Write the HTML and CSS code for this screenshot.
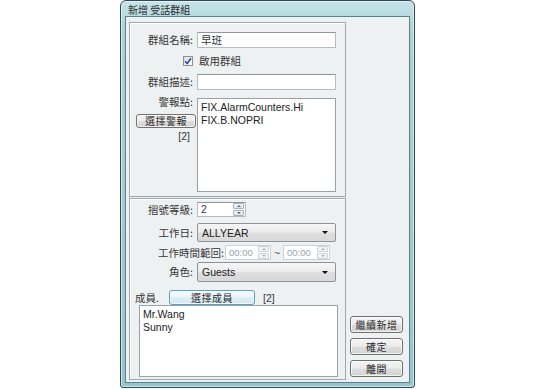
FILE: index.html
```html
<!DOCTYPE html>
<html lang="zh-Hant">
<head>
<meta charset="utf-8">
<title>新增 受話群組</title>
<link rel="stylesheet" href="styles.css">
</head>
<body>
<div class="window">
  <div class="titlebar">新增 受話群組</div>
  <div class="client">
    <div class="main">
      <div class="panel p1">
        <div class="row r-name">
          <span class="lbl">群組名稱:</span>
          <div class="input wide">早班</div>
        </div>
        <div class="row r-check">
          <span class="cb"><svg width="8" height="8" viewBox="0 0 8 8"><path d="M1 4.2 L3.2 6.5 L7 1.2" fill="none" stroke="#2b4f9e" stroke-width="1.6"/></svg></span>
          <span class="cb-text">啟用群組</span>
        </div>
        <div class="row r-desc">
          <span class="lbl">群組描述:</span>
          <div class="input wide"></div>
        </div>
        <div class="row r-alarm">
          <div class="alarm-side">
            <span class="lbl-top">警報點:</span>
            <button class="btn btn-alarm">選擇警報</button>
            <span class="count">[2]</span>
          </div>
          <div class="list alarm-list">FIX.AlarmCounters.Hi<br>FIX.B.NOPRI</div>
        </div>
      </div>
      <div class="panel p2">
        <div class="row r-spin">
          <span class="lbl">摺號等級:</span>
          <div class="input spin">
            <span class="val">2</span>
            <span class="spinbtns"><span class="sb up"></span><span class="sb down"></span></span>
          </div>
        </div>
        <div class="row r-day">
          <span class="lbl">工作日:</span>
          <div class="combo wide"><span class="val latin">ALLYEAR</span><span class="arrow"></span></div>
        </div>
        <div class="row r-time">
          <span class="lbl lbl-time">工作時間範回:</span>
          <div class="input spin time t1">
            <span class="val">00:00</span>
            <span class="spinbtns"><span class="sb up"></span><span class="sb down"></span></span>
          </div>
          <span class="tilde">~</span>
          <div class="input spin time t2">
            <span class="val">00:00</span>
            <span class="spinbtns"><span class="sb up"></span><span class="sb down"></span></span>
          </div>
        </div>
        <div class="row r-role">
          <span class="lbl">角色:</span>
          <div class="combo wide"><span class="val latin">Guests</span><span class="arrow"></span></div>
        </div>
        <div class="row r-member">
          <span class="mem-lbl">成員.</span>
          <button class="btn btn-member">選擇成員</button>
          <span class="mem-count">[2]</span>
        </div>
        <div class="list member-list">Mr.Wang<br>Sunny</div>
      </div>
    </div>
    <div class="side">
      <button class="btn side-btn">繼續新增</button>
      <button class="btn side-btn">確定</button>
      <button class="btn side-btn">離開</button>
    </div>
  </div>
</div>
</body>
</html>
```

FILE: styles.css
```css
* { box-sizing: border-box; margin: 0; padding: 0; }
html, body { background: #ffffff; }
body {
  margin: 0;
  font-family: "Noto Sans CJK TC", "Liberation Sans", sans-serif;
  font-size: 10.5px;
  color: #363636;
}

.window {
  margin-left: 120px;
  width: 295px;
  height: 388px;
  border: 1px solid #2e4950;
  border-radius: 6px 6px 3px 3px;
  background: linear-gradient(to bottom, #c6e4e9 0, #a9d2d9 30px, #95c6cf 100%);
  box-shadow: inset 0 0 0 1px rgba(255,255,255,0.55);
  display: flex;
  flex-direction: column;
}

.titlebar {
  flex: none;
  height: 15px;
  line-height: 17px;
  padding-left: 7px;
  font-size: 10px;
  color: #2a2a2a;
}

.client {
  flex: 1;
  margin: 0 4px 4px 4px;
  background: #eef1f2;
  border: 1px solid #5f7f89;
  display: flex;
}

.main {
  width: 220px;
  padding: 5px 0 2px 3px;
  display: flex;
  flex-direction: column;
  gap: 1px;
}

.panel {
  border: 1px solid #9ea7ab;
  box-shadow: inset 1px 1px 0 #ffffff;
  background: #eef1f2;
  display: flex;
  flex-direction: column;
}
.p1 { height: 175px; flex: none; }
.p2 { flex: 1; }

.row { display: flex; align-items: center; flex: none; }
.lbl {
  width: 63px;
  margin-right: 4px;
  text-align: right;
  white-space: nowrap;
  line-height: 12px;
}

.input {
  height: 16px;
  background: #ffffff;
  border: 1px solid #b5bcc2;
  border-top-color: #8e969c;
  padding-left: 3px;
  line-height: 14px;
  white-space: nowrap;
}
.wide { width: 139px; }

.latin, .list, .val { font-family: "Liberation Sans", sans-serif; }

.r-name { margin-top: 9px; height: 16px; }
.r-check { margin-top: 7px; height: 12px; padding-left: 53px; }
.r-desc { margin-top: 7px; height: 16px; }
.r-alarm { margin-top: 8px; height: 94px; align-items: flex-start; }

.cb {
  width: 10px;
  height: 10px;
  border: 1px solid #8e8f8f;
  background: linear-gradient(135deg, #dcdcdc, #ffffff);
  display: flex;
  align-items: center;
  justify-content: center;
  margin-right: 6px;
}
.cb-text { line-height: 12px; }

.alarm-side {
  width: 67px;
  display: flex;
  flex-direction: column;
  align-items: flex-end;
}
.lbl-top { margin-top: -2px; padding-right: 4px; line-height: 12px; }
.count {
  font-family: "Liberation Sans", sans-serif;
  padding-right: 7px;
  line-height: 12px;
  margin-top: 2px;
}

.list {
  background: #ffffff;
  border: 1px solid #9aa2a8;
  padding: 2px 3px;
  line-height: 12.5px;
  color: #222;
}
.alarm-list { width: 139px; height: 94px; }

.btn {
  font-family: "Noto Sans CJK TC", sans-serif;
  font-size: 10px;
  color: #2a2a2a;
  border: 1px solid #707070;
  border-radius: 3px;
  background: linear-gradient(to bottom, #f4f4f4 0, #ececec 48%, #dedede 52%, #d2d2d2 100%);
  box-shadow: inset 0 0 0 1px rgba(255,255,255,0.7);
  display: flex;
  align-items: center;
  justify-content: center;
  line-height: 12px;
  letter-spacing: 0.5px;
}
.btn-alarm {
  width: 60px;
  height: 14px;
  margin-top: 6px;
  margin-right: 1px;
}

/* panel 2 */
.r-spin { margin-top: 3px; height: 15px; }
.r-day { margin-top: 6px; height: 19px; }
.r-time { margin-top: 3px; height: 15px; }
.r-role { margin-top: 2px; height: 20px; }
.r-member { margin-top: 8px; height: 15px; }

.spin {
  width: 49px;
  height: 15px;
  display: flex;
  align-items: center;
  justify-content: space-between;
  padding-right: 1px;
}
.spin .val { line-height: 13px; }
.spinbtns {
  width: 11px;
  height: 13px;
  display: flex;
  flex-direction: column;
  gap: 1px;
}
.sb {
  flex: 1;
  border: 1px solid #a8b0b6;
  border-radius: 1px;
  background: linear-gradient(#f7f8f9, #dde2e6);
  display: flex;
  align-items: center;
  justify-content: center;
}
.sb::after {
  content: "";
  border-left: 2px solid transparent;
  border-right: 2px solid transparent;
}
.sb.up::after { border-bottom: 2px solid #4a6a8a; }
.sb.down::after { border-top: 2px solid #4a6a8a; }

.combo {
  height: 100%;
  border: 1px solid #8e9397;
  border-radius: 2px;
  background: linear-gradient(to bottom, #f6f6f6 0, #ebebeb 48%, #dfdfdf 52%, #d8d8d8 100%);
  display: flex;
  align-items: center;
  justify-content: space-between;
  padding: 0 7px 0 4px;
}
.combo .val { font-size: 10.5px; color: #222; }
.arrow {
  width: 0;
  height: 0;
  border-left: 3px solid transparent;
  border-right: 3px solid transparent;
  border-top: 3px solid #111;
}

.lbl-time { width: 94px; margin-right: 1px; }
.time { border-color: #cbd3d8; }
.time .val { color: #9aa4aa; font-size: 9.5px; }
.time .sb { border-color: #ccd3d8; background: #f1f3f4; }
.time .sb.up::after { border-bottom-color: #a9b3ba; }
.time .sb.down::after { border-top-color: #a9b3ba; }
.t1 { width: 46px; }
.t2 { width: 47px; }
.tilde {
  width: 12px;
  text-align: center;
  font-family: "Liberation Sans", sans-serif;
  color: #555;
}

.mem-lbl { margin-left: 5px; width: 34px; line-height: 12px; }
.btn-member {
  width: 86px;
  height: 15px;
  border-color: #5aa0c0;
  background: linear-gradient(to bottom, #f4fafd 0, #e9f4fa 48%, #dcedf6 52%, #d3e8f3 100%);
}
.mem-count {
  margin-left: 8px;
  font-family: "Liberation Sans", sans-serif;
  line-height: 12px;
}
.member-list {
  margin-left: 9px;
  width: 199px;
  height: 72px;
  flex: none;
}

.side {
  flex: 1;
  display: flex;
  flex-direction: column;
  justify-content: flex-end;
  align-items: flex-start;
  padding: 0 0 5px 4px;
  gap: 5px;
}
.side-btn {
  width: 53px;
  height: 17px;
}
```
